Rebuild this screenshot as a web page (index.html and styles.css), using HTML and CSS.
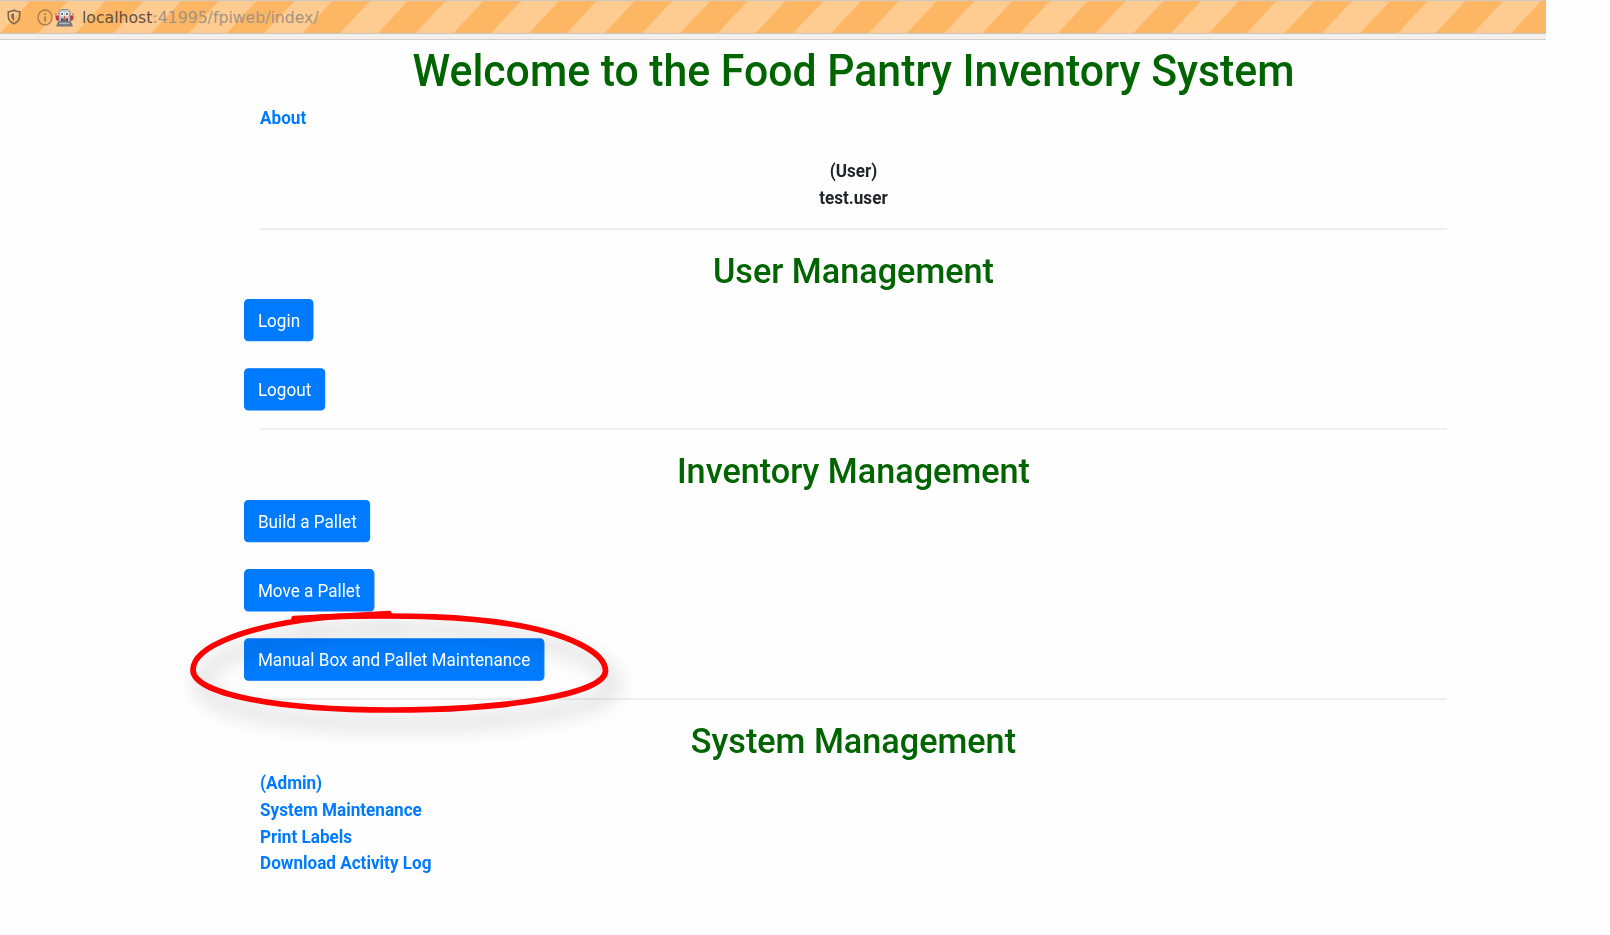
FILE: index.html
```html
<!DOCTYPE html>
<html lang="en">
<head>
<meta charset="utf-8">
<title>Food Pantry Inventory System</title>
<link rel="stylesheet" href="styles.css">
</head>
<body>
<header class="browser">
  <div class="address">
    <svg class="stripes" width="1546" height="32" aria-hidden="true">
      <defs>
        <pattern id="stripe" width="75.55" height="32" patternUnits="userSpaceOnUse">
          <path d="M0.2 32L30.2 0H67.800L37.800 32Z" fill="#fdb664"/>
        </pattern>
      </defs>
      <rect width="1546" height="32" fill="#fecb91"/>
      <rect width="1546" height="32" fill="url(#stripe)"/>
    </svg>
    <svg class="shield" width="14" height="16" viewBox="0 0 14 16" fill="none">
      <path d="M7 1.2C5 2.4 3 2.6 1.3 2.7V7C1.3 10.8 3.6 13.4 7 14.8C10.4 13.4 12.7 10.8 12.7 7V2.7C11 2.6 9 2.4 7 1.2Z" stroke="#80664a" stroke-width="1.6"/>
      <path d="M7 4.3V11.8C5.3 10.6 4.2 9 4.2 7V4.9C5.2 4.8 6.2 4.6 7 4.3Z" fill="#80664a"/>
    </svg>
    <span class="divider"></span>
    <svg class="info" width="16" height="17" viewBox="0 0 16 17" fill="none">
      <ellipse cx="8" cy="8.5" rx="7" ry="7.5" stroke="#a87d50" stroke-width="1.3"/>
      <path d="M8 7.4V12.6M8 4.2V6" stroke="#a87d50" stroke-width="1.8"/>
    </svg>
    <svg class="robot" width="19" height="19" viewBox="0 0 19 19">
      <path d="M1 5V9M18 5V9" stroke="#e57d70" stroke-width="1.6"/>
      <path d="M.5 9.5C.5 7.8 3 7 4 8V13C2 13 .5 12 .5 9.5ZM18.5 9.5C18.5 7.8 16 7 15 8V13C17 13 18.5 12 18.5 9.5Z" fill="#d72c31"/>
      <path d="M4 3.500L6 1.500H13L15 3.500V13.500H4Z" fill="#c3cad4" stroke="#7f8791" stroke-width="1"/>
      <path d="M3 13.500H16L18 18.500H1Z" fill="#74777e"/>
      <path d="M4.500 15.500H14.500" stroke="#b4b9c1" stroke-width="1.400"/>
      <circle cx="7" cy="6" r="2" fill="#fff"/><circle cx="12" cy="6" r="2" fill="#fff"/>
      <circle cx="7" cy="6" r=".9" fill="#222"/><circle cx="12" cy="6" r=".9" fill="#222"/>
      <path d="M9 8H10V10H9Z" fill="#e34b3c"/>
      <path d="M6 10.500H13V13H6Z" fill="#443a45"/>
      <path d="M7.500 11.800H11.500" stroke="#e9915b"/>
    </svg>
    <span class="url"><span class="host">localhost</span>:41995/fpiweb/index/</span>
  </div>
</header>
<main class="container">
  <h1>Welcome to the Food Pantry Inventory System</h1>
  <nav class="links"><a href="#">About</a></nav>
  <div class="user"><span>(User)</span><span>test.user</span></div>
  <hr>
  <h2>User Management</h2>
  <div class="actions">
    <a class="btn" href="#">Login</a>
    <a class="btn" href="#">Logout</a>
  </div>
  <hr>
  <h2>Inventory Management</h2>
  <div class="actions">
    <a class="btn" href="#">Build a Pallet</a>
    <a class="btn" href="#">Move a Pallet</a>
    <a class="btn" href="#">Manual Box and Pallet Maintenance</a>
  </div>
  <hr>
  <h2>System Management</h2>
  <nav class="links">
    <a href="#">(Admin)</a>
    <a href="#">System Maintenance</a>
    <a href="#">Print Labels</a>
    <a href="#">Download Activity Log</a>
  </nav>
</main>
<svg class="annotation" width="480" height="170" viewBox="170 590 480 170" fill="none" aria-hidden="true">
  <g class="mark">
    <path d="M294 618.500L345 616L389 613.500" stroke-width="5.500" stroke-linecap="round"/>
    <path d="M296 619.500C310 618 330 616.500 350 616.200C410 615.500 461 616 510 624C566 633 605.500 651.500 605.500 671C605.500 693 511 710 391 710C280 710 193 694.500 193 670C193 645.500 251 624.500 330 617" stroke-width="5.700" stroke-linecap="round"/>
  </g>
</svg>
</body>
</html>
```
FILE: styles.css
```css
* { box-sizing: border-box; }

body {
  margin: 0;
  min-height: 935px;
  overflow: hidden;
  background: #fefefe;
  color: #212529;
  font: 16px/24px Roboto, sans-serif;
}

.browser {
  width: 1546px;
  height: 40px;
  background: #f2efed;
  border-bottom: 1px solid #d2cecb;
}

.address {
  position: relative;
  display: flex;
  align-items: center;
  height: 34px;
  padding-left: 7px;
  border-top: 1px solid #cfc8c0;
  border-bottom: 1px solid #c9c6c2;
}

.stripes { position: absolute; top: 0; left: 0; }
.shield, .info, .robot, .divider, .url { position: relative; flex: none; }
.divider { width: 1px; height: 24px; margin: 0 7px 0 8px; background: #d9bd9b; }
.robot { margin-left: 2px; }

.url {
  margin-left: 8px;
  padding-top: 1px;
  color: #a49480;
  font: 15.7px/20px "DejaVu Sans", sans-serif;
  white-space: nowrap;
}
.host { color: #62503e; }

/* The page is shown slightly enlarged, a little more in height than in width. */
.container {
  width: 1140px;
  margin: 1px 0 0 244px;
  padding: 0 15px;
  transform: scale(1.0692, 1.1165);
  transform-origin: 0 0;
}

h1, h2 {
  color: #006400;
  font-weight: 500;
  line-height: 1.2;
  text-align: center;
}
h1 { margin: 0; padding: 2.8px 0 5.2px; font-size: 40px; }
h2 { margin: 0; padding: 2px 0 6px; font-size: 32px; }

hr { margin: 16px 0; border: 0; border-top: 1px solid rgba(0, 0, 0, .1); }

.links {
  display: flex;
  flex-direction: column;
  align-items: flex-start;
  padding-top: 1px;
  font-weight: 700;
}
.links a { color: #007bff; text-decoration: none; }

.user {
  display: flex;
  flex-direction: column;
  align-items: center;
  margin: 24px 0 15px;
  font-weight: 700;
}
.user + hr { margin-top: 0; }

.actions {
  display: flex;
  flex-direction: column;
  align-items: flex-start;
  gap: 24px;
  margin-left: -15px;
}

.btn {
  padding: 7px 12px 5px;
  border: 1px solid #007bff;
  border-radius: 4px;
  background: #007bff;
  color: #fff;
  text-decoration: none;
}

.annotation { position: absolute; top: 590px; left: 170px; pointer-events: none; }
.mark { stroke: #f00; filter: drop-shadow(8px 14px 10px rgba(0, 0, 0, .28)); }
```
